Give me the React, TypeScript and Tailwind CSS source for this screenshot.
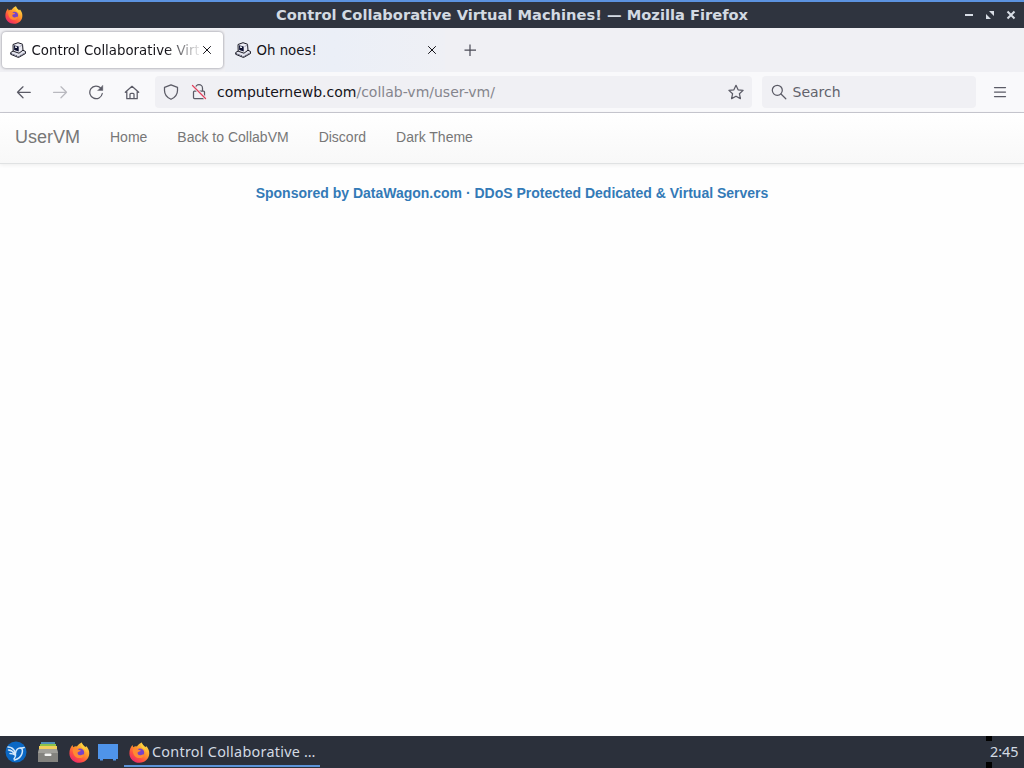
import { ReactNode } from 'react';

const FirefoxLogo = ({ className, id }: { className: string; id: string }) => (
  <svg viewBox="0 0 20 20" className={className}>
    <defs>
      <linearGradient id={id} x1="0.85" y1="0.05" x2="0.2" y2="0.95">
        <stop offset="0" stopColor="#ffe14a" />
        <stop offset="0.4" stopColor="#ff9a2b" />
        <stop offset="0.72" stopColor="#ff5040" />
        <stop offset="1" stopColor="#e8286e" />
      </linearGradient>
    </defs>
    <path
      d="M12.2 0.4c.5 2 2 3 3.4 4.3l1.1-.7c1.7 2 2.7 4.3 2.6 7C19.1 16 15.2 19.8 10 19.8 4.6 19.8.5 15.9.4 10.9.3 7.6 1.5 5 3.3 2.8l.7 2.3C5 4.2 6.3 3.9 7.500 4.2 8.7 2.6 10.4 1 12.2.4z"
      fill={`url(#${id})`}
    />
    <circle cx="10.500" cy="10.300" r="4" fill="#7743c8" />
    <path d="M3.500 6.7c1.6-1 4-1 5.600.7 1 .2 2 .5 2.200 1-.4.8-2.600.8-3.100 1.700-.3 1.700 1 2.800 2.700 2.600 1.500-.1 2.300-1.100 3.600-.6-.5 2-2.300 3.200-4.500 3.200-4 0-6.500-2.700-6.500-8.600z" fill="#ff8a32" />
    <path d="M12.200.4c.2 3.400 4.700 4.900 4.600 9.500-.6-1.900-1.700-3.100-3.200-3.900-1.900-1-2.700-3.200-1.400-5.600z" fill="#ffd03c" />
  </svg>
);

// Old CRT computer favicon
const ComputerIcon = () => (
  <svg viewBox="0 0 16 16" className="h-4 w-4 shrink-0">
    <path d="M.7 10.500L4 8.500l8.500-.5 3 1.500v2L8.500 15.500.7 12.300z" fill="#e3e4ee" stroke="#1c1c26" strokeWidth="1" />
    <path d="M1 11.500l7.500 3 6.700-3.700" fill="none" stroke="#4f5168" strokeWidth="1" strokeDasharray="1.500 1" />
    <path d="M3 2.500L8 .7l4.500 1.500.5 6L9 11.200l-5.800-2z" fill="#ececf4" stroke="#1c1c26" strokeWidth="1" />
    <path d="M4 3.300l4.700 1.200v5L4.200 8z" fill="#0c1030" />
    <path d="M5 4.300l2 .5v1.300l-2-.4z" fill="#fff" />
    <path d="M9.500 4.600l3-1.600" stroke="#9a9cb0" strokeWidth=".8" />
  </svg>
);

const CloseIcon = ({ className }: { className: string }) => (
  <svg viewBox="0 0 10 10" className={className} fill="none" stroke="currentColor" strokeWidth="1">
    <path d="M1.200 1.200l7.600 7.600M8.800 1.200L1.200 8.800" />
  </svg>
);

const ToolbarIcon = ({ children, className = '' }: { children: ReactNode; className?: string }) => (
  <svg
    viewBox="0 0 16 16"
    className={`h-4 w-4 shrink-0 ${className}`}
    fill="none"
    stroke="#5b5b66"
    strokeWidth="1.250"
    strokeLinecap="round"
    strokeLinejoin="round"
  >
    {children}
  </svg>
);

const TitleBar = () => (
  <div className="flex h-7 items-center border-t-2 border-[#5c93e0] bg-[#2f343f] pr-2 pl-[5px]">
    <FirefoxLogo id="ff-title" className="h-[18px] w-[18px]" />
    <div className="flex-1 pl-[37px] text-center text-[14.667px] leading-[26px] font-bold whitespace-pre text-[#d3dae3]">
      Control Collaborative Virtual Machines! — Mozilla Firefox
    </div>
    <div className="flex items-center gap-[11px] text-[#d8dde5]">
      <svg viewBox="0 0 10 10" className="h-[10px] w-[10px]">
        <path d="M1 4h8v2H1z" fill="currentColor" />
      </svg>
      <svg viewBox="0 0 10 10" className="h-[10px] w-[10px]" fill="currentColor">
        <path d="M4 1h5v5zM1 4l5 5H1z" />
      </svg>
      <svg viewBox="0 0 10 10" className="h-[10px] w-[10px]" fill="none" stroke="currentColor" strokeWidth="2">
        <path d="M1.500 1.500l7 7M8.500 1.500l-7 7" />
      </svg>
    </div>
  </div>
);

const TabStrip = () => (
  <div className="flex h-11 items-center bg-[#f0f0f4] text-[13.333px] text-[#15141a]">
    <div className="ml-[2px] flex h-9 w-[221px] items-center rounded-[4px] bg-white pl-2 shadow-[0_0_3px_rgba(60,60,75,0.6)]">
      <ComputerIcon />
      <div className="ml-[5.500px] w-[167.500px] bg-linear-to-r from-[#15141a] from-80% to-[#15141a]/10 bg-clip-text pt-[2px] whitespace-nowrap text-transparent">
        Control Collaborative Virt
      </div>
      <CloseIcon className="ml-[3px] h-[10px] w-[10px]" />
    </div>
    <div className="ml-[2px] flex h-11 w-[220px] items-center bg-linear-to-r from-[#edeff5] via-[#ebeff7] to-[#eff0f5] pl-[10px]">
      <ComputerIcon />
      <div className="ml-[5.500px] w-[167.500px] pt-[2px]">Oh noes!</div>
      <CloseIcon className="ml-[3px] h-[10px] w-[10px]" />
    </div>
    <svg viewBox="0 0 14 14" className="ml-[18px] h-[14px] w-[14px]" fill="none" stroke="#4a4a55" strokeWidth="1.200">
      <path d="M7 1.500v11.500M1.500 7.200h11.500" />
    </svg>
  </div>
);

const NavToolbar = () => (
  <div className="flex h-[41px] items-center border-b border-[#c8c8d0] bg-[#f9f9fb] pr-4 pl-4 text-[14px]">
    <ToolbarIcon>
      <path d="M14.300 8.300H1.500M7 2.800L1.500 8.300 7 13.800" />
    </ToolbarIcon>
    <ToolbarIcon className="ml-5 opacity-40">
      <path d="M1.500 8.300h13M9 2.800l5.500 5.500L9 13.800" />
    </ToolbarIcon>
    <ToolbarIcon className="ml-5">
      <path d="M14.300 9.500A6.300 6.300 0 1 1 12.800 4.200" />
      <path d="M14.800 1.500v5H9.800z" fill="#5b5b66" strokeWidth=".4" />
    </ToolbarIcon>
    <ToolbarIcon className="ml-[19.500px]">
      <path d="M1.300 8.300l6.700-6 6.700 6M2.800 7.500v7.200h10.400V7.500M6 14.500v-4.200a1 1 0 0 1 1-1h2a1 1 0 0 1 1 1v4.200" />
    </ToolbarIcon>
    <div className="ml-[15.500px] flex h-8 w-[597px] items-center rounded-[4px] bg-[#f0f0f4] pr-2 pl-2">
      <ToolbarIcon>
        <path d="M8 .8l6.500 2.500v3.200c0 4-2.500 7-6.500 8.800C4 13.500 1.500 10.500 1.500 6.500V3.300z" />
      </ToolbarIcon>
      <ToolbarIcon className="ml-3">
        <path d="M4.500 7V4.200a3.500 3.500 0 0 1 7 0V7M3.500 7h9a1 1 0 0 1 1 1v5.500a1 1 0 0 1-1 1h-9a1 1 0 0 1-1-1V8a1 1 0 0 1 1-1z" />
        <path d="M1.500 1.500l13 13" stroke="#f0f0f4" strokeWidth="3" />
        <path d="M1.500 1.500l13 13" stroke="#e2415c" />
      </ToolbarIcon>
      <div className="ml-[10px] flex-1 pt-[1px] whitespace-nowrap text-[#15141a]">
        computernewb.com<span className="text-[#85858d]">/collab-vm/user-vm/</span>
      </div>
      <ToolbarIcon>
        <path d="M8 1.300l2.100 4.500 5 .6-3.700 3.300 1 4.900L8 12.200l-4.400 2.400 1-4.900L.9 6.400l5-.6z" />
      </ToolbarIcon>
    </div>
    <div className="ml-[10px] flex h-8 w-[214px] items-center rounded-[4px] bg-[#f0f0f4] pl-[9px]">
      <ToolbarIcon>
        <circle cx="6.300" cy="6.300" r="5" />
        <path d="M10 10l4.800 4.800" />
      </ToolbarIcon>
      <div className="ml-[5.500px] pt-[1px] text-[#62626b]">Search</div>
    </div>
    <ToolbarIcon className="ml-4">
      <path d="M2.500 3.500h11M2.500 8h11M2.500 12.500h11" />
    </ToolbarIcon>
  </div>
);

const links = ['Home', 'Back to CollabVM', 'Discord', 'Dark Theme'];

const Page = () => (
  <div className="flex-1 bg-[#fefefe] font-['Liberation_Sans',sans-serif]">
    <nav className="flex h-[51px] items-center border-b border-[#e0e2e3] bg-linear-to-b from-white to-[#f8f8f8] pb-[2px] pl-[15px] text-[#777] shadow-[0_1px_4px_rgba(0,0,0,0.07)]">
      <div className="w-[95px] text-[18px]">UserVM</div>
      <div className="flex gap-[30px] text-[14px]">
        {links.map((link) => (
          <div key={link}>{link}</div>
        ))}
      </div>
    </nav>
    <div className="mt-[19px] text-center text-[14px] leading-5 font-bold whitespace-nowrap text-[#337ab7]">
      Sponsored by DataWagon.com · DDoS Protected Dedicated &amp; Virtual Servers
    </div>
  </div>
);

const Taskbar = () => (
  <div className="flex h-8 items-center bg-[#2b303b] pl-[5px] text-[#d3dae3]">
    {/* Lubuntu menu */}
    <svg viewBox="0 0 22 22" className="h-[22px] w-[22px]">
      <circle cx="11" cy="11" r="10.500" fill="#0b68c4" />
      <g fill="none" stroke="#d5e9fb" strokeWidth="1.500" strokeLinecap="round">
        <path d="M3 6c3.500 0 6 2 7.500 6M3.500 9c2.500 0 4.500 1.500 6.500 4M5 12.500c2 0 3.500.5 5 1.500" />
        <path d="M10.500 12c.3-3 2.500-5.300 5-5 2.300.3 2.200 3 1.500 5.500-.8 2.800-3.500 5.500-7.500 6.500" />
        <path d="M16 7.300l3.200-.8M10.500 13c.5 1.500 0 3-1.500 5" />
      </g>
    </svg>
    {/* File manager */}
    <svg viewBox="0 0 22 22" className="ml-[10px] h-[22px] w-[22px]">
      <path d="M4 1h14v4H4z" fill="#4f8fb6" />
      <path d="M3 3h16v4H3z" fill="#8bc34a" />
      <path d="M2 5h18v4H2z" fill="#f0cf5c" />
      <path d="M2 8h18l1 4v9H1v-9z" fill="#84837f" />
      <path d="M2 8h18l1 4H1z" fill="#a09f9a" />
      <rect x="7.500" y="12.500" width="7" height="2.500" rx="1" fill="#f5f5f3" />
    </svg>
    <FirefoxLogo id="ff-launch" className="ml-[9.500px] h-[21px] w-[21px]" />
    {/* Show desktop */}
    <svg viewBox="0 0 20 18" className="ml-[8.500px] h-[18px] w-5">
      <path d="M0 1h20v15h-2v1.500h-3V16H5v1.500H2V16H0z" fill="#4f94ea" />
    </svg>
    <div className="ml-[6px] flex h-8 w-[196px] flex-col">
      <div className="flex h-[29px] items-center pt-[3px] pl-[5px]">
        <FirefoxLogo id="ff-task" className="h-[21px] w-[21px] shrink-0" />
        <div className="ml-[2px] font-['Noto_Sans',sans-serif] text-[14.400px] tracking-[0.260px] whitespace-nowrap">
          Control Collaborative …
        </div>
      </div>
      <div className="h-[2px] bg-[#5c93d8]" />
    </div>
    <div className="ml-auto flex h-full w-[38px] items-center">
      <div className="flex h-full w-[4px] flex-col justify-between">
        <div className="h-[5px] w-[6px] bg-black" />
        <div className="h-[6px] w-[6px] bg-black" />
      </div>
      <div className="font-['Noto_Sans',sans-serif] text-[14.400px]">2:45</div>
    </div>
  </div>
);

const App = () => {
  return (
    <div className="flex h-[768px] w-[1024px] flex-col overflow-hidden font-['DejaVu_Sans',sans-serif]">
      <TitleBar />
      <TabStrip />
      <NavToolbar />
      <Page />
      <Taskbar />
    </div>
  );
};

export default App;
